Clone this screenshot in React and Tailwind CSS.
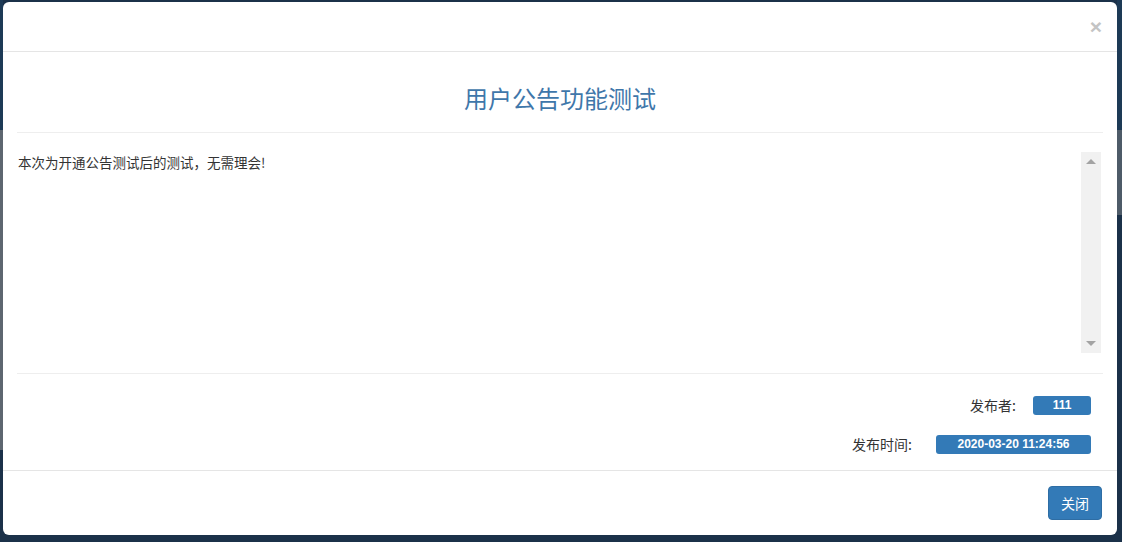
export default function App() {
    const blue = 'bg-[#337ab7]';

    return (
        <div className="w-[1122px] h-[542px] bg-[#1b3149] flex overflow-hidden font-['Noto_Sans_CJK_SC','Noto_Sans',sans-serif]">
            {/* backdrop strips visible at the edges */}
            <div className="w-[3px] flex flex-col shrink-0">
                <div className="h-[130px] bg-[#1d3a56]" />
                <div className="h-[320px] bg-[#5d6670]" />
                <div className="flex-1 bg-[#1b3149]" />
            </div>

            <div className="flex-1 flex flex-col pt-[2px] pb-[7px]">
                <div className="flex-1 bg-white rounded-[6px] flex flex-col text-[#333]">
                    {/* header */}
                    <div className="h-[50px] border-b border-[#e5e5e5] flex items-center justify-end pr-[15px]">
                        <span className="text-[21px] font-bold leading-none text-[#c4c4c4] font-['Liberation_Sans',sans-serif]">×</span>
                    </div>

                    {/* body */}
                    <div className="flex-1 px-[14px] flex flex-col">
                        <h2 className="h-[81px] flex items-center justify-center text-[24px] leading-[30px] text-[#3f77aa] border-b border-[#eeeeee] pt-[11px]">
                            用户公告功能测试
                        </h2>

                        <div className="mt-[19px] h-[201px] flex">
                            <p className="flex-1 pl-[1px] text-[13.5px] leading-[20px] text-[#333]">
                                本次为开通公告测试后的测试，无需理会!
                            </p>
                            <div className="w-[20px] mr-[2px] bg-[#f1f1f1] flex flex-col items-center justify-between py-[7px]">
                                <span className="w-0 h-0 border-x-[5px] border-x-transparent border-b-[5px] border-b-[#a3a3a3]" />
                                <span className="w-0 h-0 border-x-[5px] border-x-transparent border-t-[5px] border-t-[#a3a3a3]" />
                            </div>
                        </div>

                        <div className="mt-[20px] border-t border-[#eeeeee] flex flex-col items-end pr-[12px] pt-[21px] gap-[19px] text-[14px] leading-[20px]">
                            <div className="flex items-center">
                                <span className="mr-[17px]">发布者:</span>
                                <span className={`${blue} w-[58px] h-[19px] rounded-[3px] text-white text-[12px] font-bold flex items-center justify-center font-['Liberation_Sans',sans-serif]`}>111</span>
                            </div>
                            <div className="flex items-center">
                                <span className="mr-[24px]">发布时间:</span>
                                <span className={`${blue} w-[155px] h-[19px] rounded-[3px] text-white text-[12px] font-bold flex items-center justify-center font-['Liberation_Sans',sans-serif]`}>2020-03-20 11:24:56</span>
                            </div>
                        </div>
                    </div>

                    {/* footer */}
                    <div className="mt-[13px] h-[65px] border-t border-[#e5e5e5] flex items-center justify-end pr-[15px]">
                        <button className={`${blue} w-[54px] h-[34px] rounded-[4px] text-white text-[14px] border border-[#2e6da4]`}>关闭</button>
                    </div>
                </div>
            </div>

            <div className="w-[5px] flex flex-col shrink-0">
                <div className="h-[130px] bg-[#1d3a56]" />
                <div className="h-[85px] bg-[#4e5b68]" />
                <div className="flex-1 bg-[#1b3149]" />
            </div>
        </div>
    );
}
